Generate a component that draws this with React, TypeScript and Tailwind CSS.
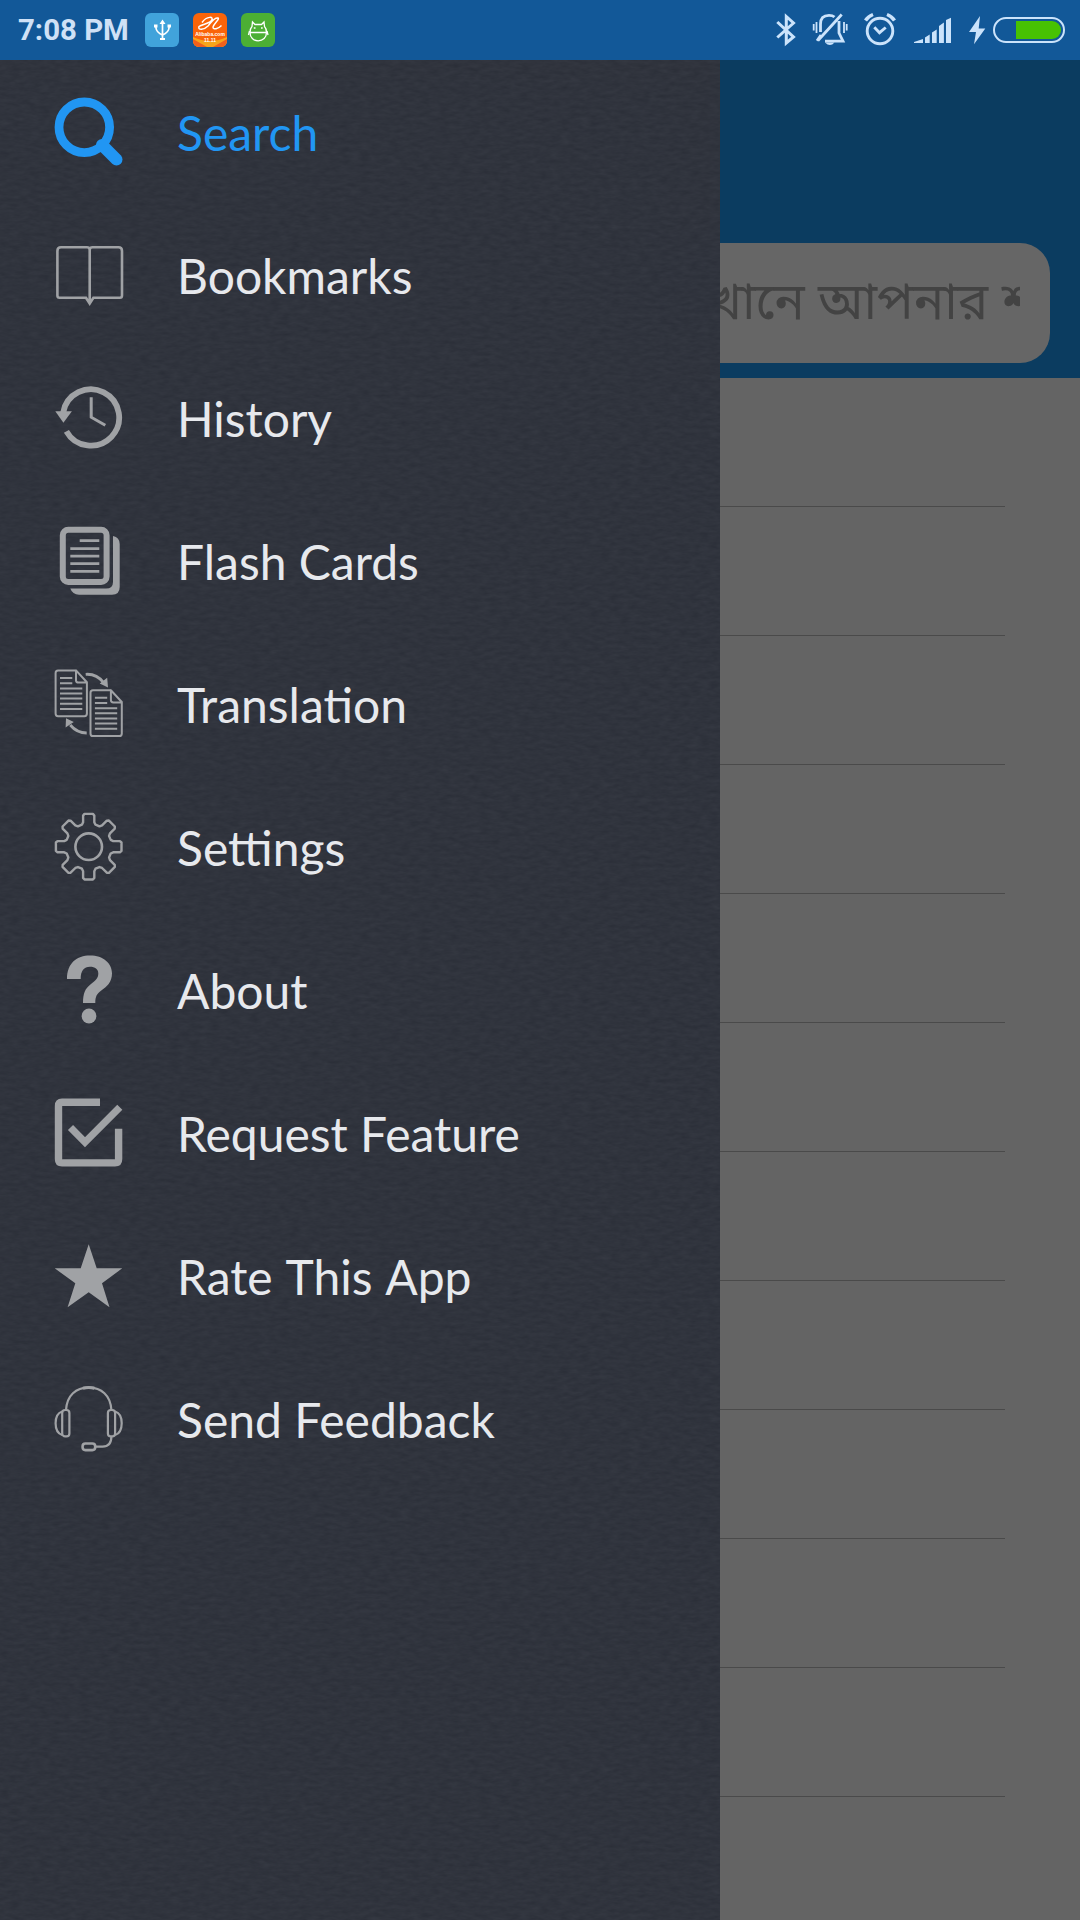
import React from 'react';

interface MenuItem {
  id: string;
  label: string;
  icon: React.ReactNode;
}

const gearPath = () => {
  const tooth = [
    [-6.8, -22],
    [-5.6, -24.5],
    [-5.6, -31.2],
    [-4.2, -32.8],
    [4.2, -32.8],
    [5.6, -31.2],
    [5.6, -24.5],
    [6.8, -22],
  ];
  const points: string[] = [];
  for (let i = 0; i < 8; i++) {
    const a = (i * Math.PI) / 4;
    tooth.forEach(([x, y]) => {
      const px = 36.7 + x * Math.cos(a) - y * Math.sin(a);
      const py = 35.7 + x * Math.sin(a) + y * Math.cos(a);
      points.push(`${px.toFixed(2)} ${py.toFixed(2)}`);
    });
  }
  return `M${points.join('L')}Z`;
};

const Icon: React.FC<{ children: React.ReactNode }> = ({ children }) => (
  <svg className="w-[72px] h-[72px] shrink-0" viewBox="0 0 72 72" fill="none" stroke="currentColor">
    {children}
  </svg>
);

const PageOutline = () => (
  <>
    <path d="M24 2.4H6Q3.6 2.4 3.6 5V45.6Q3.6 48.2 6 48.2H32.4Q34.9 48.2 34.9 45.6V14.2L24 2.4V12.5Q24 14.6 26.5 14.6H34.5" />
    <path d="M8 10H20.3M8 15.3H20.3M8 20.4H30.3M8 25.5H30.3M8 30.6H30.3M8 35.8H30.3M8 41H30.3" />
  </>
);

const menuItems: MenuItem[] = [
  {
    id: 'search',
    label: 'Search',
    icon: (
      <Icon>
        <circle cx="32.3" cy="31.3" r="25.3" strokeWidth="8.8" />
        <path d="M50 49L64.5 63.5" strokeWidth="12" strokeLinecap="round" />
      </Icon>
    ),
  },
  {
    id: 'bookmarks',
    label: 'Bookmarks',
    icon: (
      <Icon>
        <path
          d="M37.7 10.5Q37.3 8.3 35 8.3H9Q5.4 8.3 5.4 12V56.5Q5.4 58.8 7.5 58.8H34L37.7 64.5L41.4 58.8H68Q70 58.8 70 56.5V12Q70 8.3 66.5 8.3H40.5Q38 8.3 37.7 10.5V63"
          strokeWidth="2.6"
        />
      </Icon>
    ),
  },
  {
    id: 'history',
    label: 'History',
    icon: (
      <Icon>
        <path d="M11.2 30.5A28.2 28.2 0 1 1 14.4 49.3" strokeWidth="5.8" />
        <path d="M3.3 29.3H19.9L11.4 40.8Z" fill="currentColor" stroke="none" />
        <path d="M39.2 15.3V35.2L53.3 43.3" strokeWidth="3" />
      </Icon>
    ),
  },
  {
    id: 'flash-cards',
    label: 'Flash Cards',
    icon: (
      <Icon>
        <rect x="10.8" y="4.7" width="43.8" height="52.4" rx="5.5" strokeWidth="6" />
        <path d="M27.7 15.7H47.3M18.3 23.6H47.3M18.3 31.1H47.3M18.3 38.7H47.3M18.3 46.3H47.3" strokeWidth="2.7" />
        <path
          d="M61 11Q67.7 12.5 67.7 19V62Q67.7 69.7 60 69.7H27Q20.5 69.7 18.3 63.6H54Q61 63.6 61 57Z"
          fill="currentColor"
          stroke="none"
        />
      </Icon>
    ),
  },
  {
    id: 'translation',
    label: 'Translation',
    icon: (
      <Icon>
        <g strokeWidth="2" strokeLinejoin="round">
          <PageOutline />
          <g transform="translate(34.9 19.8)">
            <PageOutline />
          </g>
        </g>
        <path d="M33.7 6.3Q44.5 5.5 51.5 14.5" strokeWidth="2.8" />
        <path d="M34.7 65Q25 65 18.2 57" strokeWidth="2.8" />
        <path d="M56 19.4L47.7 15.6L55.2 9.8ZM14 50.2L13.6 59.4L21.8 54Z" fill="currentColor" stroke="none" />
      </Icon>
    ),
  },
  {
    id: 'settings',
    label: 'Settings',
    icon: (
      <Icon>
        <path d={gearPath()} strokeWidth="2.4" strokeLinejoin="round" />
        <circle cx="36.7" cy="35.7" r="13.3" strokeWidth="2.6" />
      </Icon>
    ),
  },
  {
    id: 'about',
    label: 'About',
    icon: (
      <Icon>
        <g fill="currentColor" stroke="none">
          <path d="M15 25C15 9.3 24.7 1.5 38 1.5C51.3 1.5 60 9.3 60 19.3C60 28.7 54.7 32.7 49.3 36.5C44.7 39.8 43.3 42.7 43.3 49H31C31 39.3 33 34.7 38.7 30.2C44 26 46.3 24.3 46.3 19.3C46.3 15.3 43 12.8 38 12.8C32 12.8 28.7 16.7 28.7 25Z" />
          <circle cx="37" cy="62" r="7.4" />
        </g>
      </Icon>
    ),
  },
  {
    id: 'request',
    label: 'Request Feature',
    icon: (
      <Icon>
        <path
          d="M48 5.2H10Q6.5 5.2 6.5 9V62Q6.5 65.9 10 65.9H63Q66.6 65.9 66.6 62V31.7"
          strokeWidth="7.4"
        />
        <path d="M18.5 30.5L33 45.2L67.8 10.3" strokeWidth="7.2" />
      </Icon>
    ),
  },
  {
    id: 'rate',
    label: 'Rate This App',
    icon: (
      <Icon>
        <path
          d="M36.7 4.3L44.7 28.3H70.3L50 43.3L57.5 67.2L36.7 52.3L15.6 67.2L23.3 43.3L2.7 28.3H28.7Z"
          fill="currentColor"
          stroke="none"
        />
      </Icon>
    ),
  },
  {
    id: 'feedback',
    label: 'Send Feedback',
    icon: (
      <Icon>
        <g strokeWidth="2.2">
          <path d="M14 27C15 12 24 4.7 36.7 4.7S58.4 12 59.4 27" />
          <path d="M31 5.2Q36.700 3.600 42.400 5.200" strokeWidth="3" />
          <rect x="10.2" y="27" width="7.2" height="26.4" rx="3" />
          <rect x="55.9" y="27" width="7.2" height="26.4" rx="3" />
          <path d="M10.2 28.500C5.500 30 3.600 35 3.600 40.200S5.500 50.500 10.200 52" />
          <path d="M63.1 28.500C67.800 30 69.700 35 69.700 40.200S67.800 50.500 63.100 52" />
          <path d="M59.400 53.500C59.400 60 56 63.600 50.500 63.600H43.300" />
          <rect x="30.600" y="60.500" width="12.600" height="6.600" rx="2.800" strokeWidth="2.600" />
        </g>
      </Icon>
    ),
  },
];

const NotificationIcons = () => (
  <div className="flex gap-[14px] ml-[15px]">
    <svg className="w-[34px] h-[34px]" viewBox="0 0 34 34" fill="none" stroke="#fff">
      <rect width="34" height="34" rx="6" fill="#41a3db" stroke="none" />
      <path d="M17.5 9V26M11 12.5V15Q11.500 19.500 17.500 22Q23.500 19.500 24 15V12.500" strokeWidth="1.700" />
      <path d="M17.500 6.500L20.500 11H14.500ZM9 11.500H12.500V14.500H9ZM22.500 11.500H26V14.500H22.500ZM15 25H20V27H15Z" fill="#fff" stroke="none" />
    </svg>
    <div className="relative w-[34px] h-[34px] rounded-md overflow-hidden bg-[#fa6409]">
      <svg className="w-[34px] h-[34px]" viewBox="0 0 34 34" fill="none">
        <path d="M0 24Q17 32 34 24V34H0Z" fill="#f9a51a" />
        <path d="M0 26L14 34H0ZM34 26L20 34H34Z" fill="#f0601c" />
        <path
          d="M9 9.500C14 2.500 21.500 3.500 18.500 7.500C16 11 9 11 6 13.500C4.500 17.500 11 17 15 13C18.500 9 21.500 4 25 5C27 6 20.500 11 20 14C20 17.500 25.500 15.500 28.500 12.500"
          stroke="#fff"
          strokeWidth="1.500"
        />
      </svg>
      <div className="absolute inset-x-0 top-[18px] flex flex-col items-center font-['Liberation_Sans'] font-bold text-[5px] leading-[6px] text-white">
        <span>Alibaba.com</span>
        <span>11.11</span>
      </div>
    </div>
    <svg className="w-[34px] h-[34px]" viewBox="0 0 34 34" fill="none" stroke="#fff" strokeWidth="1.3">
      <rect width="34" height="34" rx="6" fill="#4caf34" stroke="none" />
      <path d="M9 19.500H25.500M9 19.500C9 24.500 12.500 27.800 17.200 27.800S25.500 24.500 25.500 19.500C25.500 16.500 24.500 14.500 23.500 13.500L23 9L20.500 11.500H14L11.500 9L11 13.500C10 14.500 9 16.500 9 19.500Z" />
      <path d="M8.500 18L7.500 22M26 18L27 22" />
      <path d="M12.800 15H14.500M20 15H21.700" strokeWidth="1.700" />
    </svg>
  </div>
);

const SystemIcons = () => (
  <div className="flex items-center ml-auto mr-[15px] text-[#cbe3fb]">
    <svg className="w-[20px] h-[60px] mr-4" viewBox="0 0 20 60" fill="none" stroke="currentColor" strokeWidth="3">
      <path d="M1.3 22L17.500 37L10.300 43V16.500L17.500 23L1.300 37.500" />
    </svg>
    <svg className="w-[36px] h-[60px] mr-[15px]" viewBox="0 0 36 60" fill="none" stroke="currentColor" strokeWidth="2.8">
      <path d="M8.500 32V24C8.500 18 12 15.300 17 15.300Q20.500 15.300 22.500 17M27 21V33L31 41.200H13M29.700 14.500L6 40.500M5 40.800L9 35" />
      <path d="M4.500 22V33M1.700 24V30.500M32 22V33M34.700 24V30.500" strokeWidth="1.800" />
      <path d="M13 42.500H22.500Q18 47.500 13 42.500Z" fill="currentColor" stroke="none" />
    </svg>
    <svg className="w-[34px] h-[60px] mr-4" viewBox="0 0 34 60" fill="none" stroke="currentColor" strokeWidth="2.9">
      <circle cx="17" cy="31" r="12.800" />
      <path d="M11.300 27.300L16.500 32.700L22.700 27.500" />
      <path d="M2.500 20.500Q5 16.500 10 14.500M31.500 20.500Q29 16.500 24 14.500" strokeWidth="3.500" />
    </svg>
    <svg className="w-[40px] h-[60px] mr-[15px]" viewBox="0 0 40 60" fill="currentColor">
      <path d="M1 43V42L10 39V43ZM12 43V37.500L16.700 34.500V43ZM19 43V32.500L23.700 29.500V43ZM26 43V26L30.900 22.500V43ZM33 43V20L38 17.800V43Z" />
    </svg>
    <svg className="w-[18px] h-[60px] mr-[7px]" viewBox="0 0 18 60" fill="currentColor">
      <path d="M12 16L1 32H8L6 44.300L17.300 28.500H10.700Z" />
    </svg>
    <svg className="w-[72px] h-[60px]" viewBox="0 0 72 60" fill="none">
      <rect x="1" y="18" width="70" height="24" rx="12" stroke="currentColor" strokeWidth="2" />
      <path d="M23 21H59A9 9 0 0 1 59 39H23Z" fill="#47c203" />
    </svg>
  </div>
);

const StatusBar = () => (
  <header className="h-[60px] flex items-center bg-[#125898]">
    <div className="ml-[18px] w-[112px] font-['Roboto',sans-serif] font-bold text-[29.4px] leading-[36px] text-[#cfe1f6] whitespace-nowrap">
      7:08 PM
    </div>
    <NotificationIcons />
    <SystemIcons />
  </header>
);

// Faint leather grain over the drawer background
const LeatherTexture = () => (
  <svg className="absolute inset-0 w-full h-full opacity-[0.06]">
    <filter id="grain" x="0" y="0" width="100%" height="100%" colorInterpolationFilters="sRGB">
      <feTurbulence type="fractalNoise" baseFrequency="0.1 0.26" numOctaves="3" seed="4" />
      <feColorMatrix type="saturate" values="0" />
      <feComponentTransfer>
        <feFuncA type="linear" slope="0" intercept="1" />
      </feComponentTransfer>
    </filter>
    <rect width="100%" height="100%" filter="url(#grain)" />
  </svg>
);

const Drawer: React.FC<{ activeId: string }> = ({ activeId }) => (
  <nav className="relative w-[720px] shrink-0 bg-[#2b2f39] overflow-hidden">
    <LeatherTexture />
    <ul className="relative">
      {menuItems.map((item) => (
        <li
          key={item.id}
          className={`h-[143px] pl-[52px] pt-9 flex items-start gap-[53px] ${
            item.id === activeId ? 'text-[#2196f3]' : 'text-[#a0a2a5]'
          }`}
        >
          {item.icon}
          <span
            className={`font-['Lato',sans-serif] text-[48px] leading-[74px] whitespace-nowrap ${
              item.id === activeId ? 'text-[#2196f3]' : 'text-[#e7e9ed]'
            } ${item.id === 'rate' ? '[word-spacing:2px]' : ''}`}
          >
            {item.label}
          </span>
        </li>
      ))}
    </ul>
  </nav>
);

const DimmedPage = () => (
  <main className="flex-1 min-w-0 flex flex-col bg-[#646464]">
    <div className="h-[318px] pt-[183px] pr-[30px] bg-[#0b3c60]">
      <div className="h-[120px] pr-[30px] rounded-r-[30px] bg-[#666666]">
        <div className="h-full pt-[7px] flex items-center justify-start overflow-hidden">
          <span className="-ml-[49px] font-['Noto_Sans_Bengali','Noto_Sans',sans-serif] text-[51px] text-[#434343] whitespace-nowrap">
            এখানে আপনার শব্দ
          </span>
        </div>
      </div>
    </div>
    <div className="mr-[75px]">
      {Array.from({ length: 11 }, (_, i) => (
        <div key={i} className="h-[129px] border-b border-[#4a4a4a]" />
      ))}
    </div>
  </main>
);

export default function App() {
  return (
    <div className="w-[1080px] h-[1920px] flex flex-col overflow-hidden">
      <StatusBar />
      <div className="flex-1 flex min-h-0">
        <Drawer activeId="search" />
        <DimmedPage />
      </div>
    </div>
  );
}
